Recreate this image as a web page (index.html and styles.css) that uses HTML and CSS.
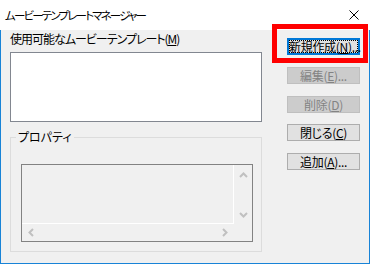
FILE: index.html
```html
<!DOCTYPE html>
<html lang="ja">
<head>
    <meta charset="UTF-8">
    <meta name="viewport" content="width=device-width, initial-scale=1.0">
    <title>ムービーテンプレートマネージャー</title>
    <link rel="stylesheet" href="styles.css">
</head>
<body>

    <div class="window">

        <!-- タイトルバー -->
        <div class="titlebar">
            <span class="title">ムービーテンプレートマネージャー</span>
            <svg class="close" width="10" height="10" viewBox="0 0 10 10">
                <path d="M0.5 0.5 L9.5 9.5 M9.5 0.5 L0.5 9.5" stroke="#000" stroke-width="1" fill="none"/>
            </svg>
        </div>

        <div class="dialog">
            <div class="left-col">
                <label class="list-label">使用可能なムービーテンプレート(<u>M</u>)</label>
                <div class="listbox"></div>

                <!-- プロパティ -->
                <fieldset class="group">
                    <legend>プロパティ</legend>
                    <div class="props">
                        <div class="props-area"></div>
                        <div class="vscroll">
                            <svg class="arrow" width="9" height="6" viewBox="0 0 9 6"><polyline points="1,5 4.5,1.5 8,5" /></svg>
                            <svg class="arrow" width="9" height="6" viewBox="0 0 9 6"><polyline points="1,1 4.5,4.5 8,1" /></svg>
                        </div>
                        <div class="hscroll">
                            <svg class="arrow" width="6" height="9" viewBox="0 0 6 9"><polyline points="5,1 1.5,4.5 5,8" /></svg>
                            <svg class="arrow" width="6" height="9" viewBox="0 0 6 9"><polyline points="1,1 4.5,4.5 1,8" /></svg>
                        </div>
                        <div class="corner"></div>
                    </div>
                </fieldset>
            </div>

            <!-- ボタン -->
            <div class="buttons">
                <button class="btn default">新規作成(<u>N</u>)...</button>
                <button class="btn" disabled>編集(<u>E</u>)...</button>
                <button class="btn" disabled>削除(<u>D</u>)</button>
                <button class="btn">閉じる(<u>C</u>)</button>
                <button class="btn">追加(<u>A</u>)...</button>
            </div>
        </div>

        <!-- 強調枠 -->
        <div class="highlight"></div>
    </div>

</body>
</html>
```

FILE: styles.css
```css
* {
    box-sizing: border-box;
    margin: 0;
    padding: 0;
}

body {
    font-family: "Noto Sans CJK JP", "Noto Sans", sans-serif;
    font-size: 12px;
    font-feature-settings: "palt";
    color: #000;
    background-color: #f0f0f0;
}

.window {
    position: relative;
    width: 370px;
    height: 264px;
    display: flex;
    flex-direction: column;
    background-color: #f0f0f0;
}

/* タイトルバー */
.titlebar {
    height: 30px;
    background-color: #fff;
    display: flex;
    align-items: center;
    justify-content: space-between;
    padding: 0 11px 0 5px;
}

.title {
    font-size: 11.5px;
    line-height: 16px;
    letter-spacing: -1.8px;
}

.close {
    display: block;
}

/* ダイアログ本体 */
.dialog {
    flex: 1;
    display: flex;
    padding: 1px 9px 0 9px;
    border: 1px solid #1883d7;
    border-top: none;
}

.left-col {
    width: 252px;
    display: flex;
    flex-direction: column;
}

.list-label {
    line-height: 16px;
    letter-spacing: -1px;
    white-space: nowrap;
}

.listbox {
    margin-top: 5px;
    height: 70px;
    background-color: #fff;
    border: 1px solid #828790;
}

.group {
    margin-top: 7px;
    border: 1px solid #dcdcdc;
    padding: 19px 8px 9px 10px;
}

.group legend {
    line-height: 16px;
    padding: 0 2px;
    margin-left: -5px;
}

.props {
    height: 78px;
    border: 1px solid #828282;
    display: grid;
    grid-template-columns: 1fr 18px;
    grid-template-rows: 1fr 17px;
}

.props-area {
    border-right: 1px solid #fff;
    border-bottom: 1px solid #fff;
}

.vscroll {
    display: flex;
    flex-direction: column;
    justify-content: space-between;
    align-items: center;
    padding: 7px 0 6px 0;
}

.hscroll {
    display: flex;
    justify-content: space-between;
    align-items: center;
    padding: 0 6px 0 6px;
}

.arrow {
    display: block;
}

.arrow polyline {
    fill: none;
    stroke: #c0c0c0;
    stroke-width: 2;
}

/* ボタン */
.buttons {
    width: 73px;
    margin-left: 25px;
    padding-top: 7px;
    display: flex;
    flex-direction: column;
    gap: 11.75px;
}

.btn {
    height: 17px;
    width: 73px;
    padding: 0;
    font-family: inherit;
    font-size: 12px;
    font-feature-settings: "palt";
    line-height: 13px;
    letter-spacing: -0.3px;
    white-space: nowrap;
    background-color: #e1e1e1;
    border: 1px solid #adadad;
    color: #000;
}

.btn.default {
    border: 2px solid #0078d7;
    outline: 1px dotted #000;
    outline-offset: -3px;
}

.btn:disabled {
    background-color: #cccccc;
    border-color: #bfbfbf;
    color: #838383;
}

/* 強調枠 */
.highlight {
    position: absolute;
    left: 272px;
    top: 24px;
    width: 96px;
    height: 39px;
    border: 5px solid #ff0000;
}
```
